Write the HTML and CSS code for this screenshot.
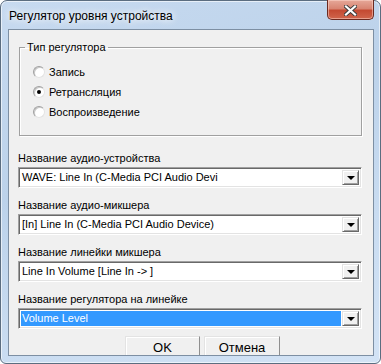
FILE: index.html
```html
<!DOCTYPE html>
<html>
<head>
  <meta charset="UTF-8">
  <title>Регулятор уровня устройства</title>
  <link rel="stylesheet" href="styles.css">
</head>
<body>
  <div class="window">
    <div class="titlebar">
      <span class="title">Регулятор уровня устройства</span>
      <div class="close">
        <svg width="13" height="11" viewBox="0 0 13 11">
          <path d="M2 1.5 L11 9.5 M11 1.5 L2 9.5" stroke="#3b3b3b" stroke-width="4" stroke-linecap="square"/>
          <path d="M2 1.5 L11 9.5 M11 1.5 L2 9.5" stroke="#fff" stroke-width="2.2" stroke-linecap="square"/>
        </svg>
      </div>
    </div>

    <div class="client">
      <!-- тип регулятора -->
      <fieldset class="group">
        <legend>Тип регулятора</legend>
        <div class="radio"><span class="dot"></span>Запись</div>
        <div class="radio checked"><span class="dot"></span>Ретрансляция</div>
        <div class="radio"><span class="dot"></span>Воспроизведение</div>
      </fieldset>

      <div class="caption">Название аудио-устройства</div>
      <div class="combo">
        <span class="value">WAVE: Line In (C-Media PCI Audio Devi</span>
        <span class="drop"></span>
      </div>

      <div class="caption">Название аудио-микшера</div>
      <div class="combo">
        <span class="value">[In] Line In (C-Media PCI Audio Device)</span>
        <span class="drop"></span>
      </div>

      <div class="caption">Название линейки микшера</div>
      <div class="combo">
        <span class="value">Line In Volume [Line In -&gt; ]</span>
        <span class="drop"></span>
      </div>

      <div class="caption">Название регулятора на линейке</div>
      <div class="combo">
        <span class="value selected">Volume Level</span>
        <span class="drop"></span>
      </div>

      <div class="buttons">
        <button class="btn">OK</button>
        <button class="btn">Отмена</button>
      </div>
    </div>
  </div>
</body>
</html>
```

FILE: styles.css
```css
html, body {
  margin:0; padding:0;
  background:#fff;
}
.window {
  box-sizing:border-box;
  width:381px; height:364px;
  border:1px solid #5b6d80;
  border-radius:7px 7px 6px 6px;
  padding:0 6px 7px 7px;
  background:linear-gradient(160deg, #c7daf0 0%, #bcd2ea 40%, #c9dcf1 70%, #d3e3f5 100%);
  box-shadow:inset 0 0 0 1px rgba(255,255,255,0.6);
  display:flex;
  flex-direction:column;
  font-family:"Liberation Sans", Arial, sans-serif;
}
.titlebar {
  height:28px;
  display:flex;
  align-items:flex-start;
}
.title {
  margin-top:8px;
  padding-left:1px;
  font-size:12px;
  line-height:15px;
  color:#000;
  text-shadow:0 0 6px #fff, 0 0 10px rgba(255,255,255,0.9);
}
.close {
  margin-left:auto;
  margin-top:-1px;
  box-sizing:border-box;
  width:47px; height:20px;
  border:1px solid #6b2a20;
  border-top:none;
  border-radius:0 0 5px 5px;
  background:linear-gradient(#e6a899 0%, #d88572 45%, #c44a32 55%, #d0654c 100%);
  box-shadow:inset 0 0 0 1px rgba(255,220,210,0.5);
  display:flex;
  align-items:center;
  justify-content:center;
}
.close svg { display:block; margin-top:1px; }

.client {
  box-sizing:border-box;
  height:327px;
  border:1px solid #7d8fa3;
  background:#f0f0f0;
  overflow:hidden;
  display:flex;
  flex-direction:column;
  font-size:11px;
  color:#000;
}

.group {
  margin:10px 11px 0 10px;
  padding:7px 0 13px 13px;
  border:1px solid #a0a0a0;
  box-shadow:inset 1px 1px #fff, 1px 1px #fff;
  min-width:0;
}
.group legend {
  margin-left:-8px;
  padding:0 2px;
  line-height:15px;
}
.radio {
  height:20px;
  display:flex;
  align-items:center;
  gap:4px;
}
.dot {
  box-sizing:border-box;
  width:12px; height:12px;
  border-radius:50%;
  border:1px solid;
  border-color:#a0a0a0 #e3e3e3 #e3e3e3 #a0a0a0;
  background:#fff;
  box-shadow:inset 1px 1px 0 #c8c8c8;
  display:flex;
  align-items:center;
  justify-content:center;
}
.radio.checked .dot::after {
  content:"";
  width:4px; height:4px;
  border-radius:50%;
  background:#000;
}

.caption {
  margin:15px 0 1px 9px;
  line-height:15px;
}
.caption ~ .caption { margin-top:10px; }

.combo {
  box-sizing:border-box;
  margin:0 11px 0 9px;
  height:21px;
  border:1px solid;
  border-color:#a0a0a0 #fff #fff #a0a0a0;
  box-shadow:inset 1px 1px #696969, inset -1px -1px #e3e3e3;
  background:#fff;
  padding:2px;
  display:flex;
  font-size:11px;
}
.value {
  flex:1;
  margin-right:1px;
  padding-left:1px;
  line-height:15px;
  white-space:nowrap;
  overflow:hidden;
}
.value.selected {
  background:#3399ff;
  color:#fff;
}
.drop {
  box-sizing:border-box;
  width:17px;
  border:1px solid;
  border-color:#e3e3e3 #696969 #696969 #e3e3e3;
  box-shadow:inset 1px 1px #fff, inset -1px -1px #a0a0a0;
  background:#f0f0f0;
  display:flex;
  align-items:center;
  justify-content:center;
}
.drop::after {
  content:"";
  width:0; height:0;
  border-left:4px solid transparent;
  border-right:4px solid transparent;
  border-top:4px solid #000;
  margin-top:1px;
}

.buttons {
  margin:7px 0 0 116px;
  display:flex;
  gap:4px;
}
.btn {
  box-sizing:border-box;
  width:75px; height:23px;
  padding:0;
  border:1px solid;
  border-color:#e3e3e3 #8f8f8f #8f8f8f #e3e3e3;
  box-shadow:inset 1px 1px #fff;
  background:#f0f0f0;
  font-family:"Liberation Sans", Arial, sans-serif;
  font-size:13px;
  color:#000;
}
.btn + .btn { width:76px; }
```
